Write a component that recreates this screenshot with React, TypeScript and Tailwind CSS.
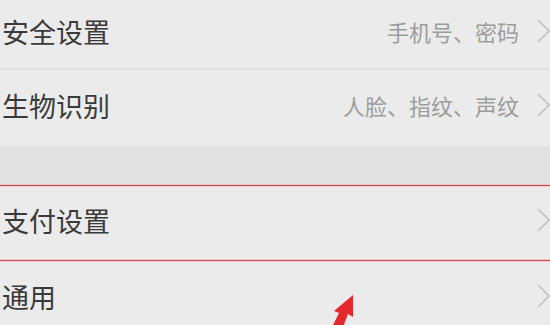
import React from "react";

interface RowProps {
  title: string;
  hint?: string;
  height: string;
}

const Chevron = () => (
  <svg width="13" height="24" viewBox="0 0 13 24" fill="none" className="shrink-0">
    <path d="M1 1 L12 12 L1 23" stroke="#c2c2c2" strokeWidth="1.6" />
  </svg>
);

const Row: React.FC<RowProps> = ({ title, hint, height }) => (
  <div className={`flex items-center justify-between pl-[2px] pb-[6px] ${height}`}>
    <span className="text-[27px] leading-none text-[#3a3a3a]">{title}</span>
    <div className="flex items-center gap-[18px]">
      {hint && <span className="text-[22px] leading-none text-[#9c9c9c]">{hint}</span>}
      <Chevron />
    </div>
  </div>
);

export default function App() {
  return (
    <div
      className="relative w-[550px] h-[325px] overflow-hidden bg-[#ebebeb]"
      style={{ fontFamily: '"Noto Sans CJK SC", "Noto Sans", sans-serif' }}
    >
      <Row title="安全设置" hint="手机号、密码" height="h-[68px]" />
      <div className="h-[2px] bg-[#e0e0e0]" />
      <Row title="生物识别" hint="人脸、指纹、声纹" height="h-[76px]" />
      <div className="h-[38px] bg-[#e1e1e1]" />

      {/* highlighted row */}
      <div className="h-[1px] bg-[#f2c9c9]" />
      <div className="h-[1px] bg-[#cf4a4c]" />
      <div className="h-[1px] bg-[#f2cfcf]" />
      <Row title="支付设置" height="h-[72px]" />
      <div className="h-[1px] bg-[#f2c9c9]" />
      <div className="h-[1px] bg-[#cf4a4c]" />
      <div className="h-[1px] bg-[#f2cfcf]" />

      <Row title="通用" height="h-[74px]" />

      {/* annotation arrow */}
      <svg className="absolute left-[320px] top-[285px]" width="40" height="40" viewBox="0 0 40 40">
        <polygon points="33,10 33,32 28,29 23,42 12,42 19,28 14,26" fill="#e5282b" />
      </svg>
    </div>
  );
}
